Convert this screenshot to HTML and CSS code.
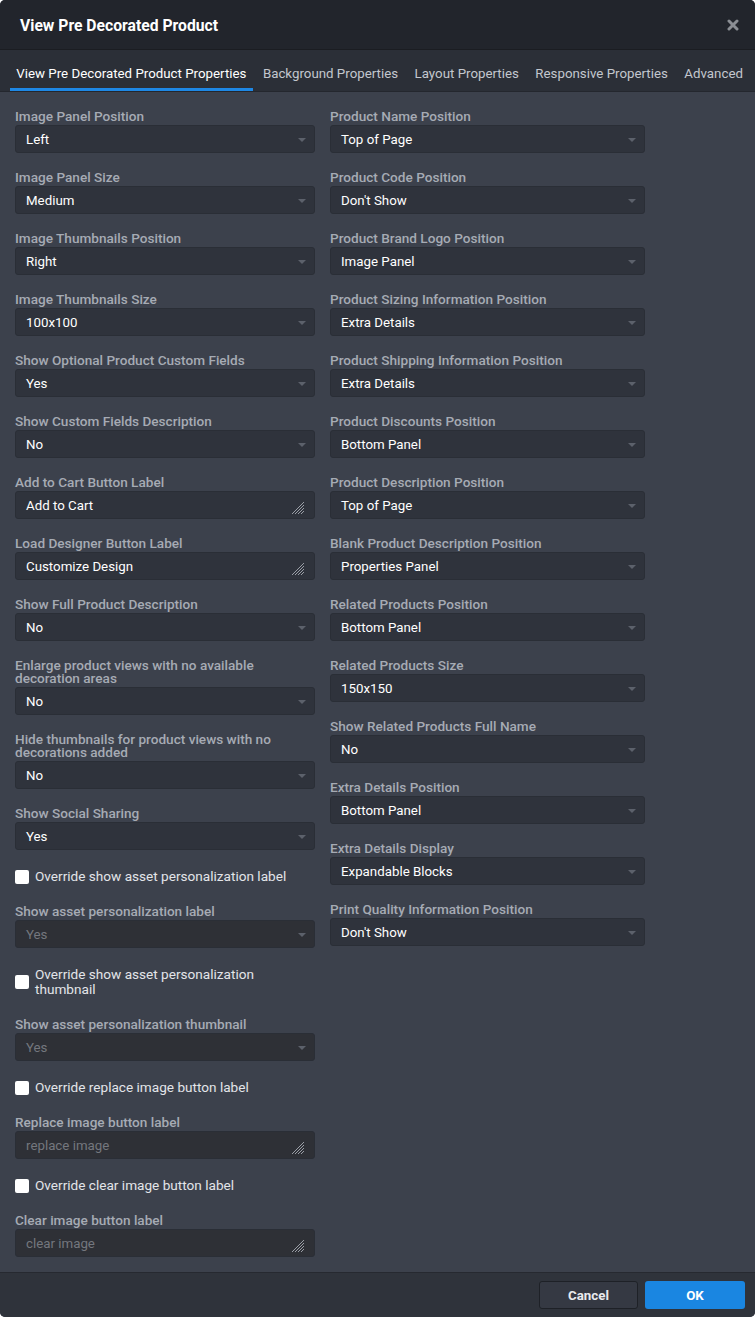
FILE: index.html
```html
<!DOCTYPE html>
<html>
<head>
<meta charset="utf-8">
<link rel="stylesheet" href="styles.css">
</head>
<body>
<div class="dialog">
  <div class="header">
    <div class="title">View Pre Decorated Product</div>
    <svg class="close" width="12" height="12" viewBox="0 0 12 12"><path d="M2 2 L10 10 M10 2 L2 10" stroke="#8b8e94" stroke-width="3" stroke-linecap="round"/></svg>
  </div>
  <div class="tabs">
    <div class="tab active">View Pre Decorated Product Properties</div>
    <div class="tab">Background Properties</div>
    <div class="tab">Layout Properties</div>
    <div class="tab">Responsive Properties</div>
    <div class="tab">Advanced</div>
  </div>
  <div class="content">
    <div class="col left">
      <div class="field"><div class="label">Image Panel Position</div><div class="select"><span>Left</span><i class="arrow"></i></div></div>
      <div class="field"><div class="label">Image Panel Size</div><div class="select"><span>Medium</span><i class="arrow"></i></div></div>
      <div class="field"><div class="label">Image Thumbnails Position</div><div class="select"><span>Right</span><i class="arrow"></i></div></div>
      <div class="field"><div class="label">Image Thumbnails Size</div><div class="select"><span>100x100</span><i class="arrow"></i></div></div>
      <div class="field"><div class="label">Show Optional Product Custom Fields</div><div class="select"><span>Yes</span><i class="arrow"></i></div></div>
      <div class="field"><div class="label">Show Custom Fields Description</div><div class="select"><span>No</span><i class="arrow"></i></div></div>
      <div class="field"><div class="label">Add to Cart Button Label</div><div class="textarea"><span>Add to Cart</span><svg class="grip" width="14" height="14" viewBox="0 0 14 14"><path d="M13 1 L1 13 M13 4 L4 13 M13 7 L7 13 M13 10 L10 13" stroke="#9a9ea6" stroke-width="1"/></svg></div></div>
      <div class="field"><div class="label">Load Designer Button Label</div><div class="textarea"><span>Customize Design</span><svg class="grip" width="14" height="14" viewBox="0 0 14 14"><path d="M13 1 L1 13 M13 4 L4 13 M13 7 L7 13 M13 10 L10 13" stroke="#9a9ea6" stroke-width="1"/></svg></div></div>
      <div class="field"><div class="label">Show Full Product Description</div><div class="select"><span>No</span><i class="arrow"></i></div></div>
      <div class="field"><div class="label">Enlarge product views with no available decoration areas</div><div class="select"><span>No</span><i class="arrow"></i></div></div>
      <div class="field"><div class="label">Hide thumbnails for product views with no decorations added</div><div class="select"><span>No</span><i class="arrow"></i></div></div>
      <div class="field"><div class="label">Show Social Sharing</div><div class="select"><span>Yes</span><i class="arrow"></i></div></div>
      <div class="check"><span class="box"></span><span class="ctext">Override show asset personalization label</span></div>
      <div class="field"><div class="label">Show asset personalization label</div><div class="select disabled"><span>Yes</span><i class="arrow"></i></div></div>
      <div class="check"><span class="box"></span><span class="ctext">Override show asset personalization thumbnail</span></div>
      <div class="field"><div class="label">Show asset personalization thumbnail</div><div class="select disabled"><span>Yes</span><i class="arrow"></i></div></div>
      <div class="check"><span class="box"></span><span class="ctext">Override replace image button label</span></div>
      <div class="field"><div class="label">Replace image button label</div><div class="textarea disabled"><span>replace image</span><svg class="grip" width="14" height="14" viewBox="0 0 14 14"><path d="M13 1 L1 13 M13 4 L4 13 M13 7 L7 13 M13 10 L10 13" stroke="#9a9ea6" stroke-width="1"/></svg></div></div>
      <div class="check"><span class="box"></span><span class="ctext">Override clear image button label</span></div>
      <div class="field last"><div class="label">Clear image button label</div><div class="textarea disabled"><span>clear image</span><svg class="grip" width="14" height="14" viewBox="0 0 14 14"><path d="M13 1 L1 13 M13 4 L4 13 M13 7 L7 13 M13 10 L10 13" stroke="#9a9ea6" stroke-width="1"/></svg></div></div>
    </div>
    <div class="col right">
      <div class="field"><div class="label">Product Name Position</div><div class="select"><span>Top of Page</span><i class="arrow"></i></div></div>
      <div class="field"><div class="label">Product Code Position</div><div class="select"><span>Don't Show</span><i class="arrow"></i></div></div>
      <div class="field"><div class="label">Product Brand Logo Position</div><div class="select"><span>Image Panel</span><i class="arrow"></i></div></div>
      <div class="field"><div class="label">Product Sizing Information Position</div><div class="select"><span>Extra Details</span><i class="arrow"></i></div></div>
      <div class="field"><div class="label">Product Shipping Information Position</div><div class="select"><span>Extra Details</span><i class="arrow"></i></div></div>
      <div class="field"><div class="label">Product Discounts Position</div><div class="select"><span>Bottom Panel</span><i class="arrow"></i></div></div>
      <div class="field"><div class="label">Product Description Position</div><div class="select"><span>Top of Page</span><i class="arrow"></i></div></div>
      <div class="field"><div class="label">Blank Product Description Position</div><div class="select"><span>Properties Panel</span><i class="arrow"></i></div></div>
      <div class="field"><div class="label">Related Products Position</div><div class="select"><span>Bottom Panel</span><i class="arrow"></i></div></div>
      <div class="field"><div class="label">Related Products Size</div><div class="select"><span>150x150</span><i class="arrow"></i></div></div>
      <div class="field"><div class="label">Show Related Products Full Name</div><div class="select"><span>No</span><i class="arrow"></i></div></div>
      <div class="field"><div class="label">Extra Details Position</div><div class="select"><span>Bottom Panel</span><i class="arrow"></i></div></div>
      <div class="field"><div class="label">Extra Details Display</div><div class="select"><span>Expandable Blocks</span><i class="arrow"></i></div></div>
      <div class="field"><div class="label">Print Quality Information Position</div><div class="select"><span>Don't Show</span><i class="arrow"></i></div></div>
    </div>
  </div>
  <div class="footer">
    <div class="btn cancel">Cancel</div>
    <div class="btn ok">OK</div>
  </div>
</div>
</body>
</html>
```

FILE: styles.css
```css
* { box-sizing: border-box; }
html, body { margin: 0; padding: 0; background: #ffffff; }
body { font-family: Roboto, "Liberation Sans", Arial, sans-serif; font-size: 13.3px; }
.dialog {
  width: 755px;
  height: 1317px;
  background: #3c414c;
  border-radius: 5px;
  overflow: hidden;
  display: flex;
  flex-direction: column;
}
.header {
  height: 50px;
  background: #22252c;
  display: flex;
  align-items: center;
  justify-content: space-between;
  padding: 0 16px 0 20px;
  border-bottom: 1px solid #1b1d22;
}
.title { color: #ffffff; font-weight: 700; font-size: 15.7px; padding-top: 2px; }
.close { display: block; margin-top: 1px; }
.tabs {
  height: 43px;
  background: #2b2f37;
  display: flex;
  align-items: stretch;
  padding: 0 0 0 10px;
  gap: 4px;
  border-bottom: 1px solid #24272e;
}
.tab {
  color: #c3c7ce;
  font-size: 13.3px;
  padding: 0 6.25px;
  display: flex;
  align-items: center;
  white-space: nowrap;
  border-bottom: 3px solid transparent;
  padding-top: 9px;
}
.tab.active { color: #ffffff; border-bottom-color: #1e88e5; }
.content {
  flex: 1;
  display: flex;
  gap: 15px;
  padding: 17px 15px 15px 15px;
}
.col { display: flex; flex-direction: column; }
.col.left { width: 300px; }
.col.right { width: 315px; }
.field { margin-bottom: 17px; }
.field.last { margin-bottom: 0; }
.label {
  color: #a6abb4;
  font-weight: 500;
  font-size: 13.6px;
  line-height: 13px;
  padding-top: 1px;
  margin-bottom: 2px;
}
.select, .textarea {
  position: relative;
  height: 28px;
  background: #2f333c;
  border: 1px solid #2a2e36;
  border-radius: 3px;
  color: #ffffff;
  font-size: 13.3px;
  display: flex;
  align-items: center;
  padding-left: 10px;
}
.textarea { align-items: flex-start; padding-top: 6px; }
.select.disabled, .textarea.disabled { background: #2e3036; color: #74777e; }
.arrow {
  position: absolute;
  right: 8px;
  top: 12px;
  width: 0;
  height: 0;
  border-left: 4px solid transparent;
  border-right: 4px solid transparent;
  border-top: 4px solid #5c616b;
}
.grip { position: absolute; right: 9px; bottom: 3px; }
.check {
  display: flex;
  align-items: center;
  padding: 2px 0 3px;
  margin-bottom: 17px;
  min-height: 20px;
}
.box {
  flex: none;
  width: 14px;
  height: 14px;
  background: #ffffff;
  border-radius: 2px;
  margin-right: 6px;
}
.ctext { color: #e3e5e9; font-size: 13.6px; line-height: 15px; }
.footer {
  height: 45px;
  background: #2f333b;
  border-top: 1px solid #262930;
  display: flex;
  align-items: center;
  justify-content: flex-end;
  gap: 7px;
  padding-right: 10px;
}
.btn {
  height: 28px;
  border-radius: 3px;
  display: flex;
  align-items: center;
  justify-content: center;
  font-weight: 700;
  font-size: 13.3px;
  color: #ffffff;
}
.btn.cancel { width: 99px; background: #353943; border: 1px solid #1e2127; color: #e9ebee; }
.btn.ok { width: 100px; background: #1a86e1; }
```
